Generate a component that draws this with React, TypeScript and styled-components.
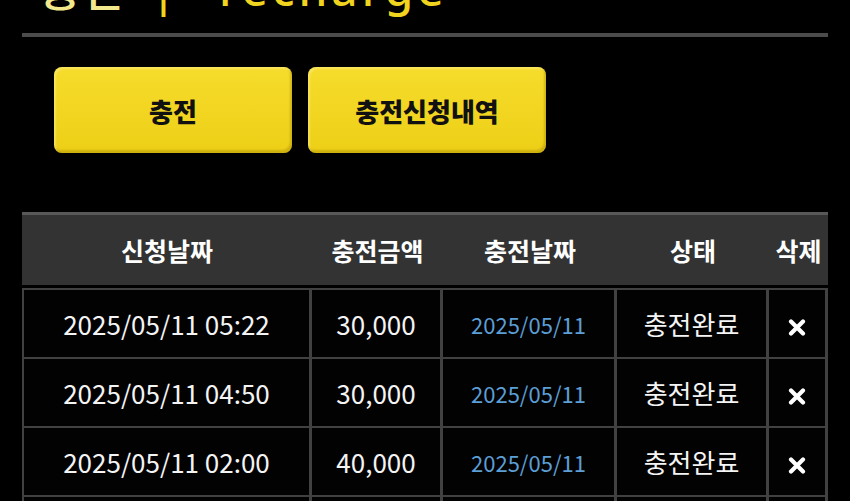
import React from 'react';
import styled, { createGlobalStyle } from 'styled-components';

type Row = {
  requested: string;
  amount: string;
  chargedAt: string;
  status: string;
};

const rows: Row[] = [
  { requested: '2025/05/11 05:22', amount: '30,000', chargedAt: '2025/05/11', status: '충전완료' },
  { requested: '2025/05/11 04:50', amount: '30,000', chargedAt: '2025/05/11', status: '충전완료' },
  { requested: '2025/05/11 02:00', amount: '40,000', chargedAt: '2025/05/11', status: '충전완료' },
  { requested: '2025/05/10 23:41', amount: '50,000', chargedAt: '2025/05/10', status: '충전완료' },
];

const headers = ['신청날짜', '충전금액', '충전날짜', '상태', '삭제'];

const CloseIcon: React.FC = () => (
  <svg width="18" height="17" viewBox="0 0 18 17" aria-hidden="true">
    <path d="M3 2.5 L15 14.5 M15 2.5 L3 14.5" stroke="#fff" strokeWidth="4.2" strokeLinecap="round" />
  </svg>
);

const App: React.FC = () => {
  return (
    <>
      <GlobalStyle />
      <Page>
        <Title>
          <TitleKo>충전</TitleKo>
          <TitleSep>|</TitleSep>
          <span>recharge</span>
        </Title>
        <Divider />
        <ButtonRow>
          <TabButton>충전</TabButton>
          <TabButton>충전신청내역</TabButton>
        </ButtonRow>
        <Table>
          <colgroup>
            <col style={{ width: 290 }} />
            <col style={{ width: 131 }} />
            <col style={{ width: 174 }} />
            <col style={{ width: 152 }} />
            <col style={{ width: 59 }} />
          </colgroup>
          <thead>
            <tr>
              {headers.map((h) => (
                <HeadCell key={h}>{h}</HeadCell>
              ))}
            </tr>
          </thead>
          <tbody>
            {rows.map((r, i) => (
              <tr key={i}>
                <Cell>{r.requested}</Cell>
                <Cell>{r.amount}</Cell>
                <Cell $blue>{r.chargedAt}</Cell>
                <Cell>{r.status}</Cell>
                <Cell>
                  <DeleteBtn aria-label="삭제">
                    <CloseIcon />
                  </DeleteBtn>
                </Cell>
              </tr>
            ))}
          </tbody>
        </Table>
      </Page>
    </>
  );
};

export default App;

const GlobalStyle = createGlobalStyle`
  html, body {
    margin: 0;
    padding: 0;
    background: #000;
    overflow: hidden;
  }
  body {
    font-family: "Noto Sans CJK KR", "Noto Sans", sans-serif;
    color: #fff;
  }
`;

const Page = styled.div`
  width: 806px;
  margin: 0 22px;
  height: 501px;
  overflow: hidden;
`;

const Title = styled.h1`
  margin: -35px 0 0 17px;
  height: 46px;
  font-family: "Noto Sans", "Noto Sans CJK KR", sans-serif;
  font-size: 46px;
  line-height: 46px;
  font-weight: 500;
  color: #f0d41e;
  white-space: nowrap;
  letter-spacing: 4px;
`;

const TitleKo = styled.span`
  color: #f4e88c;
  letter-spacing: 0;
`;

const TitleSep = styled.span`
  margin: 0 43px 0 27px;
  letter-spacing: 0;
`;

const Divider = styled.div`
  height: 4px;
  margin-top: 22px;
  background: #4b4b4b;
`;

const ButtonRow = styled.div`
  display: flex;
  gap: 16px;
  padding-left: 32px;
  margin-top: 30px;
`;

const TabButton = styled.button`
  width: 238px;
  height: 86px;
  border: none;
  border-radius: 8px;
  background: linear-gradient(#f6dc2c, #edcf16);
  box-shadow: inset -2px -3px 2px rgba(150, 120, 0, 0.35), inset 2px 2px 2px rgba(255, 245, 170, 0.4);
  font-family: "Noto Sans CJK KR", sans-serif;
  font-size: 26px;
  font-weight: 900;
  color: #111;
  cursor: pointer;
`;

const Table = styled.table`
  margin-top: 59px;
  width: 806px;
  table-layout: fixed;
  border-collapse: separate;
  border-spacing: 0;
`;

const HeadCell = styled.th`
  box-sizing: border-box;
  height: 76px;
  padding: 0;
  background: #333;
  border-top: 3px solid #585858;
  border-bottom: 3px solid #000;
  font-size: 25px;
  font-weight: 700;
  color: #fff;
  text-align: center;
  vertical-align: middle;
`;

const Cell = styled.td<{ $blue?: boolean }>`
  box-sizing: border-box;
  height: 69px;
  padding: 0;
  text-align: center;
  vertical-align: middle;
  background: #020202;
  border-right: 3px solid #414141;
  border-bottom: 2px solid #414141;
  font-size: ${(p) => (p.$blue ? '22px' : '26px')};
  color: ${(p) => (p.$blue ? '#5b9fd6' : '#f4f4f4')};
  white-space: nowrap;

  &:first-child {
    border-left: 2px solid #414141;
  }
  tr:first-child > & {
    border-top: 2px solid #414141;
    height: 71px;
  }
`;

const DeleteBtn = styled.button`
  display: inline-flex;
  align-items: center;
  justify-content: center;
  padding: 0;
  background: none;
  border: none;
  cursor: pointer;
  vertical-align: middle;
`;
